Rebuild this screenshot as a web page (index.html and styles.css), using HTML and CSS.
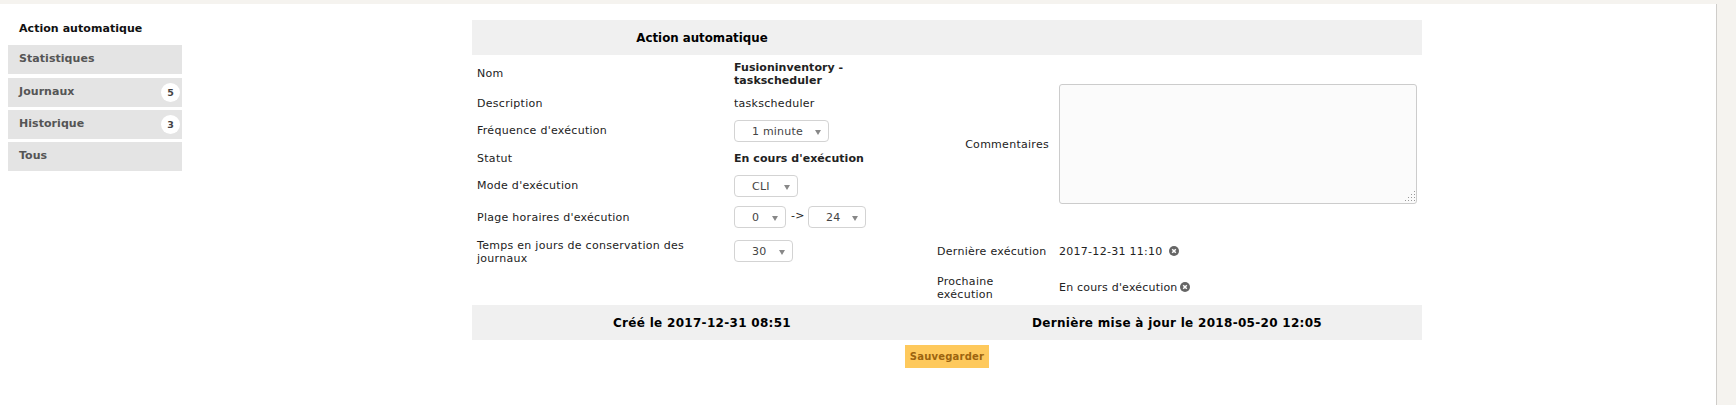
FILE: index.html
```html
<!DOCTYPE html>
<html lang="fr">
<head>
<meta charset="utf-8">
<title>Action automatique</title>
<link rel="stylesheet" href="styles.css">
</head>
<body>
<div class="page">
  <main class="main">
    <nav class="tabs">
      <div class="tab tab-active">Action automatique</div>
      <div class="tab tab-first">Statistiques</div>
      <div class="tab">Journaux<span class="badge">5</span></div>
      <div class="tab">Historique<span class="badge">3</span></div>
      <div class="tab">Tous</div>
    </nav>
    <section class="content">
      <table class="form">
        <colgroup><col class="c1"><col class="c2"><col class="c3"><col class="c4"></colgroup>
        <tr class="r-head"><th colspan="2">Action automatique</th><th colspan="2"></th></tr>
        <tr class="r-nom">
          <td>Nom</td>
          <td class="strong">Fusioninventory - taskscheduler</td>
          <td class="right" rowspan="6">Commentaires</td>
          <td rowspan="6">
            <div class="comment-wrap">
              <textarea class="comment"></textarea>
              <svg class="grip" viewBox="0 0 12 12" shape-rendering="crispEdges"><path d="M10 0h1v1h-1zM10 3h1v1h-1zM7 3h1v1h-1zM10 6h1v1h-1zM7 6h1v1h-1zM4 6h1v1h-1zM10 9h1v1h-1zM7 9h1v1h-1zM4 9h1v1h-1zM1 9h1v1h-1z" fill="#999"/></svg>
            </div>
          </td>
        </tr>
        <tr class="r-desc"><td>Description</td><td>taskscheduler</td></tr>
        <tr class="r-sel"><td class="tight">Fréquence d'exécution</td><td class="tight"><span class="select s-freq">1 minute<i class="arrow"></i></span></td></tr>
        <tr class="r-desc"><td>Statut</td><td class="strong">En cours d'exécution</td></tr>
        <tr class="r-sel"><td class="tight">Mode d'exécution</td><td class="tight"><span class="select s-cli">CLI<i class="arrow"></i></span></td></tr>
        <tr class="r-sel">
          <td>Plage horaires d'exécution</td>
          <td><div class="range"><span class="select s-from">0<i class="arrow"></i></span><span class="to">-&gt;</span><span class="select s-until">24<i class="arrow"></i></span></div></td>
        </tr>
        <tr class="r-temps">
          <td>Temps en jours de conservation des journaux</td>
          <td class="tight"><span class="select s-days">30<i class="arrow"></i></span></td>
          <td>Dernière exécution</td>
          <td>2017-12-31 11:10<svg class="x x-wide" viewBox="0 0 10 10"><circle cx="5" cy="5" r="5" fill="#666"/><path d="M3.2 3.2l3.6 3.6M6.8 3.2l-3.6 3.6" stroke="#fff" stroke-width="1.5"/></svg></td>
        </tr>
        <tr class="r-next">
          <td colspan="2"></td>
          <td>Prochaine exécution</td>
          <td class="tight next-value">En cours d'exécution<svg class="x" viewBox="0 0 10 10"><circle cx="5" cy="5" r="5" fill="#666"/><path d="M3.2 3.2l3.6 3.6M6.8 3.2l-3.6 3.6" stroke="#fff" stroke-width="1.5"/></svg></td>
        </tr>
        <tr class="r-head r-foot"><th colspan="2">Créé le 2017-12-31 08:51</th><th colspan="2">Dernière mise à jour le 2018-05-20 12:05</th></tr>
      </table>
      <div class="actions"><button class="save" type="button">Sauvegarder</button></div>
    </section>
  </main>
  <aside class="rail"></aside>
</div>
</body>
</html>
```
FILE: styles.css
```css
* { box-sizing: border-box; }
html, body { margin: 0; height: 100%; }
body {
  font-family: "DejaVu Sans", sans-serif;
  font-size: 11px;
  color: #222;
  background: #fff;
  overflow: hidden;
}
.page {
  display: flex;
  height: 405px;
  border-top: 4px solid #f5f3ef;
}
.main {
  flex: 1;
  display: flex;
  min-width: 0;
}
.rail {
  width: 20px;
  background: #f5f3ef;
  border-left: 1px solid #cfcdca;
}
.tabs {
  width: 174px;
  margin: 12px 0 0 8px;
  display: flex;
  flex-direction: column;
  gap: 3px;
}
.tab {
  position: relative;
  height: 29px;
  padding: 7px 11px 0;
  background: #e4e4e4;
  color: #555;
  font-weight: 700;
  font-size: 11px;
  letter-spacing: 0.05px;
  line-height: 14px;
}
.tab-active {
  padding-top: 6px;
  background: none;
  color: #111;
}
.tab-first { margin-bottom: 1px; }
.tab-active + .tab { margin-top: -3px; }
.badge {
  position: absolute;
  right: 2px;
  top: 5px;
  width: 19px;
  height: 19px;
  border-radius: 50%;
  background: #fff;
  font-size: 9.5px;
  line-height: 19px;
  text-align: center;
  color: #444;
}
.content {
  width: 950px;
  margin: 16px 0 0 290px;
}
.form {
  width: 950px;
  border-collapse: collapse;
  table-layout: fixed;
}
.c1 { width: 257px; }
.c2 { width: 203px; }
.c3 { width: 122px; }
.c4 { width: 368px; }
.form td {
  padding: 1px 5px 0;
  vertical-align: middle;
  line-height: 13px;
  font-size: 11px;
  letter-spacing: 0.28px;
}
.form td.tight { padding-top: 0; }
.form td.next-value { letter-spacing: 0.2px; }
.form th {
  padding: 0 5px;
  background: #f0f0f0;
  color: #000;
  font-size: 11.8px;
  text-align: center;
}
.r-foot th { font-size: 12px; letter-spacing: 0.3px; }
.r-head { height: 35px; }
.r-nom { height: 36px; }
.r-desc { height: 24px; }
.r-sel { height: 31px; }
.r-temps { height: 38px; }
.r-next { height: 35px; }
.form .strong { font-weight: 700; letter-spacing: 0.05px; }
.form .right { text-align: right; }
.comment-wrap {
  position: relative;
  width: 358px;
  height: 120px;
}
.comment {
  display: block;
  width: 100%;
  height: 100%;
  background: #fbfbfb;
  border: 1px solid #ccc;
  border-radius: 3px;
  outline: 0;
  margin: 0;
  resize: none;
}
.grip {
  position: absolute;
  right: 1px;
  bottom: 1px;
  width: 12px;
  height: 12px;
}
.select {
  position: relative;
  display: block;
  height: 22px;
  padding-left: 17px;
  border: 1px solid #d3d3d3;
  border-radius: 4px;
  background: #fff;
  color: #444;
  letter-spacing: 0.2px;
  line-height: 21px;
}
.s-freq { width: 95px; }
.s-cli { width: 64px; }
.s-from { width: 52px; }
.s-until { width: 58px; }
.s-days { width: 59px; }
.arrow {
  position: absolute;
  right: 7px;
  top: 9px;
  width: 0;
  height: 0;
  border-left: 3.5px solid transparent;
  border-right: 3.5px solid transparent;
  border-top: 5px solid #888;
}
.range { display: flex; align-items: flex-start; }
.to { margin: 0 5px; padding-top: 3px; width: 12px; white-space: nowrap; }
.x {
  width: 10px;
  height: 10px;
  margin-left: 2px;
  vertical-align: -1px;
}
.x-wide { margin-left: 6px; }
.actions {
  display: flex;
  justify-content: center;
  padding-top: 5px;
}
.save {
  width: 84px;
  height: 23px;
  padding: 0;
  border: 0;
  background: #fec95c;
  color: #9c640f;
  font: 700 10px "DejaVu Sans", sans-serif;
  letter-spacing: 0.2px;
}
```
